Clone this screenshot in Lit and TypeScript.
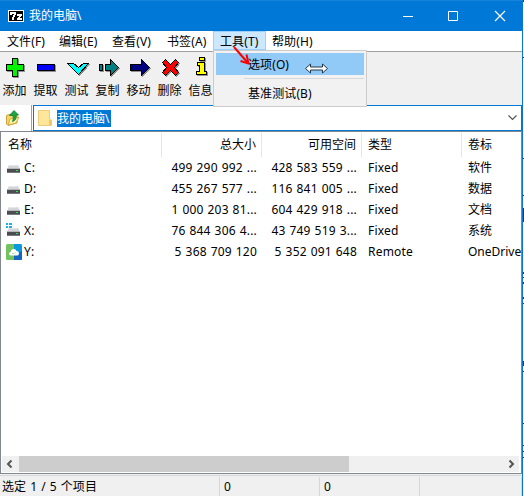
import { LitElement, html, css, svg } from "lit";
import { customElement } from "lit/decorators.js";

const drive = svg`
  <path d="M3 5H12L14 9H1Z" fill="#d3d5d8"/>
  <path d="M4 5H11V6H3Z" fill="#e6e7e9"/>
  <path d="M1 8H14V9H1Z" fill="#b5b7ba"/>
  <path d="M1 9H14V13H1Z" fill="#4b4d50"/>
  <path d="M1 12H14V13H1Z" fill="#77797c"/>
  <path d="M10 10H12V11H10Z" fill="#31e04d"/>`;
const windowsDrive = svg`
  ${drive}
  <path d="M0 0H2V2H0ZM3 0H6V2H3ZM0 3H2V5H0ZM3 3H6V5H3Z" fill="#12b5ef"/>`;
const cloud = svg`
  <rect width="16" height="16" rx="1.5" fill="#72c260"/>
  <path d="M8 0H14.5Q16 0 16 1.5V14.5Q16 16 14.5 16H8Z" fill="#0b9bdc"/>
  <path d="M8 11L16 7V14.5Q16 16 14.5 16H8Z" fill="#1565c0"/>
  <path d="M5 11.500Q3 11.500 3 9.800Q3 8.200 4.700 8Q5 5 7.800 5Q10 5 10.500 7Q13 7 13 9.300Q13 11.500 11 11.500Z" fill="#fff"/>
  <path d="M6 9.500Q8 10.200 9.500 8.500" fill="none" stroke="#a5d99a" stroke-width=".8"/>`;

const rows = [
  { icon: drive, name: "C:", total: "499 290 992 ...", free: "428 583 559 ...", type: "Fixed", label: "软件" },
  { icon: drive, name: "D:", total: "455 267 577 ...", free: "116 841 005 ...", type: "Fixed", label: "数据" },
  { icon: drive, name: "E:", total: "1 000 203 81...", free: "604 429 918 ...", type: "Fixed", label: "文档" },
  { icon: windowsDrive, name: "X:", total: "76 844 306 4...", free: "43 749 519 3...", type: "Fixed", label: "系统" },
  { icon: cloud, name: "Y:", total: "5 368 709 120", free: "5 352 091 648", type: "Remote", label: "OneDrive" },
];

const tools = [
  { d: "M7 0H12V6H18V12H12V18H7V12H1V6H7Z", fill: "#00f400", label: "添加" },
  { d: "M1 6H18V12H1Z", fill: "#0000ff", label: "提取" },
  { d: "M0 5H6L11 9L16 5H21L11 16Z", fill: "#00ffff", label: "测试" },
  { d: "M1 6H4V12H1ZM7 6H12V1L20 9L12 17V12H7Z", fill: "#008080", label: "复制" },
  { d: "M1 6H12V1L20 9L12 17V12H1Z", fill: "#000080", label: "移动" },
  { d: "M2 4L5 1L10 6L15 1L18 4L14 9L18 14L15 17L10 12L5 17L2 14L6 9Z", fill: "#ff0000", label: "删除" },
  { d: "M8 -1H13V2H8ZM6 4H13V13H15V16H5V13H8V7H6Z", fill: "#ffff00", label: "信息" },
];

const menus = [
  { text: "文件(F)", w: 52 },
  { text: "编辑(E)", w: 53 },
  { text: "查看(V)", w: 55 },
  { text: "书签(A)", w: 53 },
  { text: "工具(T)", w: 53, open: true },
  { text: "帮助(H)", w: 60 },
];

const background = [
  [0, 2], [57, 1], [158, 1], [195, 1], [208, 14], [272, 2],
  [277, 1], [282, 2], [297, 2], [303, 1], [361, 5], [371, 1],
  [423, 1], [445, 1], [451, 1], [457, 1],
];

@customElement("app-root")
export class AppRoot extends LitElement {
  static styles = css`
    :host { display: block; position: relative; width: 524px; height: 496px; overflow: hidden; background: #fff; color: #000; font: 12px/16px "Noto Sans", "Noto Sans CJK SC", sans-serif; white-space: nowrap; cursor: default; }
    * { box-sizing: border-box; }
    svg { display: block; flex: none; overflow: visible; }
    .window { width: 523px; height: 496px; border-right: 1px solid #0078d7; display: flex; flex-direction: column; background: #f0f0f0; }
    .title { height: 31px; flex: none; display: flex; align-items: center; background: #0078d7; color: #fff; border-top: 1px solid #1683d8; width: 523px; }
    .title .logo { margin-left: 8px; }
    .title .name { margin-left: 5px; flex: 1; }
    .title .buttons { margin-right: 17px; }
    .menubar { height: 20px; flex: none; background: #fff; display: flex; border-bottom: 1px solid #fff; padding-left: 1px; }
    .menu { height: 19px; line-height: 21px; padding-left: 6px; letter-spacing: .1px; }
    .menu.open { border: 1px solid #99d1ff; background: #cce8ff; line-height: 19px; padding-left: 6px; margin-left: -1px; }
    .toolbar { height: 54px; flex: none; display: flex; border-top: 1px solid #a0a0a0; padding-top: 6px; }
    .tool { width: 31px; display: flex; flex-direction: column; align-items: center; flex: none; }
    .tool svg { width: 24px; height: 22px; margin-left: 3px; }
    .tool span { margin-top: 2px; margin-left: -2px; line-height: 18px; }
    .address { height: 26px; flex: none; display: flex; background: #fff; }
    .up { width: 32px; border-right: 1px solid #a0a0a0; padding: 5px 0 0 5px; }
    .combo { flex: 1; margin-left: 1px; border: 1px solid #0078d7; display: flex; align-items: center; padding: 0 4px 0 4px; }
    .path { margin-left: 5px; background: #0078d7; color: #fff; height: 17px; line-height: 17px; width: 54px; }
    .combo .arrow { margin-left: auto; }
    .list { height: 343px; flex: none; background: #fff; border: 1px solid #828790; border-width: 1px 1px 1px 1px; display: flex; flex-direction: column; overflow: hidden; padding: 1px 0 1px 0; }
    .row { display: grid; grid-template-columns: 161px 100px 100px 100px 59px; height: 21px; flex: none; align-items: center; letter-spacing: .2px; }
    .row > span { padding: 0 5px 0 6px; overflow: hidden; }
    .row > .num { text-align: right; word-spacing: .6px; padding-left: 0; }
    .row > .name { display: flex; padding-left: 5px; gap: 2px; align-items: center; }
    .row > .vol { padding-right: 0; letter-spacing: 0; }
    .head { height: 24px; align-items: stretch; line-height: 24px; letter-spacing: 0; }
    .head > span { border-right: 1px solid #e5e5e5; }
    .head > span:first-child { padding-left: 7px; }
    .head > span:last-child { border: 0; }
    .scroll { margin: auto 2px 0 1px; height: 16px; flex: none; background: #f0f0f0; display: flex; align-items: center; }
    .thumb { width: 330px; height: 16px; background: #cdcdcd; }
    .scroll .left { margin-left: 4px; margin-right: 6px; }
    .scroll .right { margin-left: auto; margin-right: 4px; }
    .status { flex: 1; display: flex; border-top: 1px solid #d7d7d7; padding-top: 1px; margin-top: 1px; line-height: 19px; }
    .status span { width: 100px; border-right: 1px solid #d7d7d7; padding-left: 4px; height: 20px; }
    .status .sel { width: 220px; padding-left: 2px; letter-spacing: .1px; word-spacing: .8px; }
    .status .last { width: 102px; }
    .popup { position: absolute; left: 213px; top: 50px; width: 154px; height: 57px; background: #f2f2f2; border: 1px solid #ccc; padding: 2px; display: flex; flex-direction: column; }
    .item { height: 22px; line-height: 23px; padding-left: 32px; letter-spacing: .1px; }
    .item.hot { background: #91c9f7; }
    .sep { height: 1px; background: #d7d7d7; margin: 3px 0 3px 28px; flex: none; }
    .marks { position: absolute; left: 0; top: 0; }
  `;

  render() {
    return html`
      <div class="window">
        <div class="title">
          <svg class="logo" width="16" height="12" shape-rendering="crispEdges">
            <path d="M0 0H16V12H0Z" fill="#fff"/><path d="M1 1H15V11H1Z" fill="#000"/>
            <path d="M2 2H8V5H7V7H6V10H4V7H5V5H6V4H4V5H2ZM9 4H14V6H13V7H12V8H14V10H9V8H10V7H11V6H9Z" fill="#fff"/>
          </svg>
          <span class="name">我的电脑\\</span>
          <svg class="buttons" width="104" height="12" fill="none" stroke="#fff">
            <path d="M1 6.500H11M46.500 1.500H55.500V10.500H46.500Z"/><path d="M93 1L103 11M103 1L93 11" stroke-width="1.200"/>
          </svg>
        </div>
        <div class="menubar">
          ${menus.map((m) => html`<div class="menu ${m.open ? "open" : ""}" style="width:${m.w}px">${m.text}</div>`)}
        </div>
        <div class="toolbar">
          ${tools.map((t) => html`<div class="tool">
            <svg viewBox="0 0 24 22" shape-rendering="crispEdges">
              <path d=${t.d} transform="translate(1.500 1.500)" fill="#929292" stroke="#929292"/>
              <path d=${t.d} transform="translate(.5 .5)" fill=${t.fill} stroke="#000"/>
            </svg><span>${t.label}</span></div>`)}
        </div>
        <div class="address">
          <div class="up">
            <svg width="16" height="16">
              <path d="M1.500 5.500L5.500 4L7 5.500L12 5V13L3 15.500L1.500 14Z" fill="#f4d568" stroke="#cba33c"/>
              <path d="M3 15L5 9L14 7L11 13Z" fill="#fff0a6" stroke="#d6ad41"/>
              <path d="M4.500 5.500L9 .5L13.500 5H11Q12 10 7.500 11.500Q9 9 8 5.500Z" fill="#21a443" stroke="#087d28" stroke-width=".8"/>
            </svg>
          </div>
          <div class="combo">
            <svg width="14" height="16"><path d="M.5.5H11.500V9L13.500 10V15.500H.5Z" fill="#ffe69a" stroke="#e9cc78"/><path d="M11 10H13V15H11Z" fill="#edc863"/></svg>
            <span class="path">我的电脑\\</span>
            <svg class="arrow" width="9" height="6" fill="none" stroke="#555" stroke-width="1.200"><path d="M.5.5L4.500 4.500L8.500.5"/></svg>
          </div>
        </div>
        <div class="list">
          <div class="row head">
            <span>名称</span><span class="num">总大小</span><span class="num">可用空间</span><span>类型</span><span>卷标</span>
          </div>
          ${rows.map((r) => html`<div class="row">
            <span class="name"><svg width="16" height="16">${r.icon}</svg>${r.name}</span>
            <span class="num">${r.total}</span><span class="num">${r.free}</span><span>${r.type}</span><span class="vol">${r.label}</span>
          </div>`)}
          <div class="scroll">
            <svg class="left" width="7" height="8" fill="none" stroke="#555" stroke-width="2"><path d="M5.500.5L2 4L5.500 7.500"/></svg>
            <div class="thumb"></div>
            <svg class="right" width="7" height="8" fill="none" stroke="#555" stroke-width="2"><path d="M1.500.5L5 4L1.500 7.500"/></svg>
          </div>
        </div>
        <div class="status"><span class="sel">选定 1 / 5 个项目</span><span>0</span><span>0</span><span class="last"></span></div>
      </div>
      <div class="popup">
        <div class="item hot">选项(O)</div><div class="sep"></div><div class="item">基准测试(B)</div>
      </div>
      <svg class="marks" width="524" height="496">
        <path d="M234 47L247 62" stroke="#f00" stroke-width="2"/>
        <path d="M240.500 61L248.500 63.500L246.500 54.500" fill="none" stroke="#f00" stroke-width="2"/>
        <path d="M305.500 68.500L310.500 64V67H322.500V64L327.500 68.500L322.500 73V70H310.500V73Z" fill="#fff" stroke="#263746"/>
        ${background.map(([y, h]) => svg`<rect x="523" y=${y} width="1" height=${h} fill="#19324d"/>`)}
      </svg>`;
  }
}
